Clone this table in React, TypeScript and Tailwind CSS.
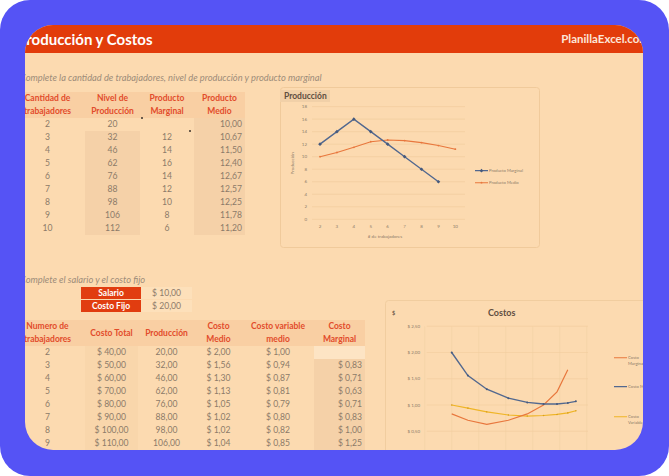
import React from "react";

const ink = "text-[#8c7b69]";

const t1Cols = [
  { w: "w-[75px]", align: "text-center" },
  { w: "w-[55px]", align: "text-center" },
  { w: "w-[54px]", align: "text-center" },
  { w: "w-[51px]", align: "text-right pr-[3px]" },
];

const t1Head = [
  ["Cantidad de", "trabajadores"],
  ["Nivel de", "Producción"],
  ["Producto", "Marginal"],
  ["Producto", "Medio"],
];

const t1Rows = [
  ["2", "20", "", "10,00"],
  ["3", "32", "12", "10,67"],
  ["4", "46", "14", "11,50"],
  ["5", "62", "16", "12,40"],
  ["6", "76", "14", "12,67"],
  ["7", "88", "12", "12,57"],
  ["8", "98", "10", "12,25"],
  ["9", "106", "8", "11,78"],
  ["10", "112", "6", "11,20"],
];

const t2Cols = [
  { w: "w-[75px]", align: "text-center" },
  { w: "w-[53px]", align: "text-center" },
  { w: "w-[57px]", align: "text-center" },
  { w: "w-[47px]", align: "text-center" },
  { w: "w-[72px]", align: "text-center" },
  { w: "w-[51px]", align: "text-right pr-[3px]" },
];

const t2Head = [
  ["Numero de", "trabajadores"],
  ["Costo Total"],
  ["Producción"],
  ["Costo", "Medio"],
  ["Costo variable", "medio"],
  ["Costo", "Marginal"],
];

const t2Rows = [
  ["2", "$ 40,00", "20,00", "$ 2,00", "$ 1,00", ""],
  ["3", "$ 50,00", "32,00", "$ 1,56", "$ 0,94", "$ 0,83"],
  ["4", "$ 60,00", "46,00", "$ 1,30", "$ 0,87", "$ 0,71"],
  ["5", "$ 70,00", "62,00", "$ 1,13", "$ 0,81", "$ 0,63"],
  ["6", "$ 80,00", "76,00", "$ 1,05", "$ 0,79", "$ 0,71"],
  ["7", "$ 90,00", "88,00", "$ 1,02", "$ 0,80", "$ 0,83"],
  ["8", "$ 100,00", "98,00", "$ 1,02", "$ 0,82", "$ 1,00"],
  ["9", "$ 110,00", "106,00", "$ 1,04", "$ 0,85", "$ 1,25"],
];

type Col = { w: string; align: string };

function Sheet({
  cols,
  head,
  rows,
  shade,
}: {
  cols: Col[];
  head: string[][];
  rows: string[][];
  shade: (c: number, r: number) => string;
}) {
  return (
    <div>
      <div className="flex h-[26px] bg-[#f9cfa3]">
        {head.map((lines, c) => (
          <div
            key={c}
            className={`${cols[c].w} flex flex-col items-center justify-center text-center text-[8.5px] leading-[13px] font-bold text-[#e24c2b]`}
          >
            {lines.map((l) => (
              <span key={l} className="whitespace-nowrap">
                {l}
              </span>
            ))}
          </div>
        ))}
      </div>
      {rows.map((row, r) => (
        <div key={r} className="flex h-[13px]">
          {row.map((v, c) => (
            <div
              key={c}
              className={`${cols[c].w} ${cols[c].align} ${shade(c, r)} text-[8.6px] leading-[13px] whitespace-nowrap ${ink}`}
            >
              {v}
            </div>
          ))}
        </div>
      ))}
    </div>
  );
}

const line = (pts: [number, number][]) => pts.map((p) => p.join(",")).join(" ");

function ProduccionChart() {
  const xs = (i: number) => 40 + i * 16.92;
  const ys = (v: number) => 132.3 - v * 6.26;
  const marg = [12, 14, 16, 14, 12, 10, 8, 6];
  const medio = [10, 10.67, 11.5, 12.4, 12.67, 12.57, 12.25, 11.78, 11.2];
  const blue: [number, number][] = marg.map((v, i) => [xs(i), ys(v)]);
  const orange: [number, number][] = medio.map((v, i) => [xs(i), ys(v)]);
  return (
    <svg width={260} height={161} viewBox="0 0 260 161" className="block">
      <rect x={0.5} y={0.5} width={259} height={160} rx={3} fill="none" stroke="#f0ca9b" />
      <rect x={0} y={3} width={50} height={12} fill="#f1d0a8" />
      <text x={4} y={12.3} fontSize={8.5} fontWeight={700} fill="#5f4e40">
        Producción
      </text>
      {[0, 1, 2, 3, 4, 5, 6, 7, 8, 9].map((k) => (
        <g key={k}>
          <line x1={32} x2={185} y1={ys(k * 2)} y2={ys(k * 2)} stroke="#f0ca9b" strokeWidth={0.6} />
          <text x={27} y={ys(k * 2) + 1.5} fontSize={4.5} textAnchor="end" fill="#8c7b69">
            {k * 2}
          </text>
        </g>
      ))}
      {[2, 3, 4, 5, 6, 7, 8, 9, 10].map((n, i) => (
        <text key={n} x={xs(i)} y={141.2} fontSize={4.5} textAnchor="middle" fill="#8c7b69">
          {n}
        </text>
      ))}
      <text x={105} y={151} fontSize={4.5} textAnchor="middle" fill="#8c7b69">
        # de trabajadores
      </text>
      <text x={14.5} y={76.3} fontSize={4.5} textAnchor="middle" fill="#8c7b69" transform="rotate(-90 14.5 76.3)">
        Producción
      </text>
      <polyline points={line(orange)} fill="none" stroke="#e8773d" strokeWidth={1.1} />
      {orange.map(([x, y], i) => (
        <circle key={i} cx={x} cy={y} r={0.9} fill="#e8773d" />
      ))}
      <polyline points={line(blue)} fill="none" stroke="#52688f" strokeWidth={1.4} />
      {blue.map(([x, y], i) => (
        <rect key={i} x={x - 1.3} y={y - 1.3} width={2.6} height={2.6} fill="#45597d" transform={`rotate(45 ${x} ${y})`} />
      ))}
      <line x1={195} x2={208} y1={83.7} y2={83.7} stroke="#52688f" strokeWidth={1.2} />
      <rect x={200.2} y={82.4} width={2.6} height={2.6} fill="#45597d" transform="rotate(45 201.5 83.7)" />
      <text x={209} y={85.2} fontSize={4.2} fill="#8c7b69">
        Producto Marginal
      </text>
      <line x1={195} x2={208} y1={95.7} y2={95.7} stroke="#e8773d" strokeWidth={1.1} />
      <circle cx={201.5} cy={95.7} r={0.9} fill="#e8773d" />
      <text x={209} y={97.2} fontSize={4.2} fill="#8c7b69">
        Producto Medio
      </text>
    </svg>
  );
}

function CostosChart() {
  const prod = [20, 32, 46, 62, 76, 88, 98, 106, 112];
  const xs = (p: number) => 39.7 + p * 1.35;
  const ys = (v: number) => 105 - (v - 1) * 52.5;
  const medio = [2.0, 1.56, 1.3, 1.13, 1.05, 1.02, 1.02, 1.04, 1.07];
  const marginal = [0.83, 0.71, 0.63, 0.71, 0.83, 1.0, 1.25, 1.67];
  const variable = [1.0, 0.94, 0.87, 0.81, 0.79, 0.8, 0.82, 0.85, 0.89];
  const blue: [number, number][] = medio.map((v, i) => [xs(prod[i]), ys(v)]);
  const orange: [number, number][] = marginal.map((v, i) => [xs(prod[i]), ys(v)]);
  const yellow: [number, number][] = variable.map((v, i) => [xs(prod[i]), ys(v)]);
  const ticks = [2.5, 2.0, 1.5, 1.0, 0.5];
  return (
    <svg width={270} height={160} viewBox="0 0 270 160" className="block">
      <rect x={0.5} y={0.5} width={300} height={200} rx={3} fill="none" stroke="#f1cd9f" />
      <text x={7} y={15} fontSize={5.5} fontWeight={700} fill="#6b5b4b">
        $
      </text>
      <text x={116.7} y={15.5} fontSize={9} fontWeight={700} textAnchor="middle" fill="#5f4e40">
        Costos
      </text>
      {[0, 20, 40, 60, 80, 100, 120].map((p) => (
        <line key={p} x1={xs(p)} x2={xs(p)} y1={ys(2.5)} y2={160} stroke="#f3d1a5" strokeWidth={0.6} />
      ))}
      {ticks.map((v) => (
        <g key={v}>
          <line x1={41.7} x2={203} y1={ys(v)} y2={ys(v)} stroke="#f1cc9e" strokeWidth={0.6} />
          <text x={35} y={ys(v) + 1.5} fontSize={4.5} textAnchor="end" fill="#8c7b69">
            {`$ ${v.toFixed(2).replace(".", ",")}`}
          </text>
        </g>
      ))}
      <polyline points={line(yellow)} fill="none" stroke="#efb526" strokeWidth={1.2} />
      {yellow.map(([x, y], i) => (
        <circle key={i} cx={x} cy={y} r={0.8} fill="#d9a01c" />
      ))}
      <polyline points={line(orange)} fill="none" stroke="#e8773d" strokeWidth={1.2} />
      <polyline points={line(blue)} fill="none" stroke="#52688f" strokeWidth={1.4} />
      {blue.map(([x, y], i) => (
        <circle key={i} cx={x} cy={y} r={1} fill="#45597d" />
      ))}
      <line x1={229} x2={242} y1={57.7} y2={57.7} stroke="#e8773d" strokeWidth={1.1} />
      <text x={243} y={59.2} fontSize={4.2} fill="#8c7b69">
        Costo
      </text>
      <text x={243} y={64.8} fontSize={4.2} fill="#8c7b69">
        Marginal
      </text>
      <line x1={229} x2={242} y1={86.7} y2={86.7} stroke="#52688f" strokeWidth={1.2} />
      <text x={243} y={88.2} fontSize={4.2} fill="#8c7b69">
        Costo Medio
      </text>
      <line x1={229} x2={242} y1={116.7} y2={116.7} stroke="#efb526" strokeWidth={1.1} />
      <text x={243} y={118.2} fontSize={4.2} fill="#8c7b69">
        Costo
      </text>
      <text x={243} y={123.8} fontSize={4.2} fill="#8c7b69">
        Variable Medio
      </text>
    </svg>
  );
}

export default function App() {
  return (
    <div className="w-[669px] h-[476px] bg-white font-[Lato,'Open_Sans',sans-serif]">
      <div className="w-full h-full rounded-[30px] bg-[#5553f5] pt-[25px] pl-[25px] pr-[26px] pb-[26px]">
        <div className="w-full h-full rounded-[28px] overflow-hidden bg-[#fcdab0]">
          <div className="-ml-[15px] w-[645px]">
            <div className="h-[28px] bg-[#e23c0b] flex items-center justify-between pl-[7px] pr-[6px]">
              <span className="text-[15px] leading-none font-bold text-white">Producción y Costos</span>
              <span className="text-[11.5px] leading-none font-bold text-[#fde6d8]">PlanillaExcel.com</span>
            </div>

            <div className="pt-[20px]">
              <p className="pl-[10px] h-[10px] text-[9.3px] leading-[10px] italic text-[#9d8c79] whitespace-nowrap">
                Complete la cantidad de trabajadores, nivel de producción y producto marginal
              </p>
              <div className="flex items-start mt-[4px]">
                <div className="relative mt-[5px] w-[235px] shrink-0">
                  <Sheet
                    cols={t1Cols}
                    head={t1Head}
                    rows={t1Rows}
                    shade={(c, r) => ((c === 1 && r > 0) || c === 3 ? "bg-[#f5d1a8]" : "")}
                  />
                  <span className="absolute left-[131px] top-[25px] w-[2px] h-[2px] bg-[#6b5b4b]" />
                  <span className="absolute left-[179px] top-[38px] w-[2px] h-[2px] bg-[#6b5b4b]" />
                </div>
                <div className="ml-[35px] shrink-0">
                  <ProduccionChart />
                </div>
              </div>
            </div>

            <div className="mt-[27px] flex items-start">
              <div className="w-[355px] shrink-0">
                <p className="pl-[10px] h-[10px] text-[9.3px] leading-[10px] italic text-[#9d8c79] whitespace-nowrap">
                  Complete el salario y el costo fijo
                </p>
                <div className="mt-[2px] ml-[71px] flex flex-col gap-px">
                  <div className="flex h-[12px]">
                    <div className="w-[60px] bg-[#e13d10] text-center text-[8.5px] leading-[12px] font-bold text-white">
                      Salario
                    </div>
                    <div className={`w-[51px] bg-[#fde0ba] pl-[11px] text-[8.6px] leading-[12px] ${ink}`}>$ 10,00</div>
                  </div>
                  <div className="flex h-[12px]">
                    <div className="w-[60px] bg-[#e13d10] text-center text-[8.5px] leading-[12px] font-bold text-white">
                      Costo Fijo
                    </div>
                    <div className={`w-[51px] bg-[#fde0ba] pl-[11px] text-[8.6px] leading-[12px] ${ink}`}>$ 20,00</div>
                  </div>
                </div>
                <div className="mt-[8px]">
                  <Sheet
                    cols={t2Cols}
                    head={t2Head}
                    rows={t2Rows}
                    shade={(c, r) =>
                      c === 5 ? (r === 0 ? "bg-[#fde4c4]" : "bg-[#f5d1a8]") : c === 1 ? "bg-[#f9d6ab]" : ""
                    }
                  />
                </div>
              </div>
              <div className="ml-[20px] mt-[25px] shrink-0">
                <CostosChart />
              </div>
            </div>
          </div>
        </div>
      </div>
    </div>
  );
}
